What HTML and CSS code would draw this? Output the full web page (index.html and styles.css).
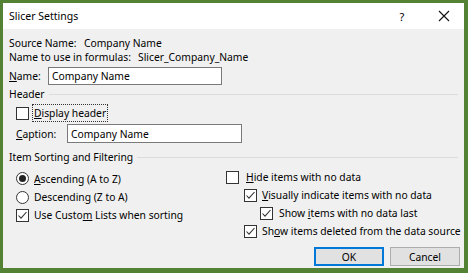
FILE: index.html
```html
<!DOCTYPE html>
<html>
<head>
<meta charset="utf-8">
<link rel="stylesheet" href="styles.css">
</head>
<body>
<div class="frame">
  <div class="dialog">
    <div class="titlebar">
      <span class="title">Slicer Settings</span>
      <span class="help">?</span>
      <span class="close"><svg width="12" height="12" viewBox="0 0 12 12"><path d="M1 1L11 11M11 1L1 11" stroke="#111" stroke-width="1.1" fill="none"/></svg></span>
    </div>
    <div class="body">
      <div class="info"><span class="info-label src-label">Source Name:</span><span>Company Name</span></div>
      <div class="info"><span class="info-label formula-label">Name to use in formulas:</span><span>Slicer_Company_Name</span></div>
      <div class="field name-field"><span class="field-label name-label"><u>N</u>ame:</span><div class="textbox name-box">Company Name</div></div>
      <div class="group-title header-title">Header</div>
      <div class="opt display-row"><span class="box"></span><span class="focus"><u>D</u>isplay header</span></div>
      <div class="field caption-field"><span class="field-label caption-label"><u>C</u>aption:</span><div class="textbox caption-box">Company Name</div></div>
      <div class="group-title sort-title">Item Sorting and Filtering</div>
      <div class="columns">
        <div class="col col-left">
          <div class="opt"><span class="radio on"></span><span><u>A</u>scending (A to Z)</span></div>
          <div class="opt"><span class="radio"></span><span>Descendin<u>g</u> (Z to A)</span></div>
          <div class="opt"><span class="box"><svg width="11" height="11" viewBox="0 0 11 11"><path d="M1.5 5.5L4 8.2L9.5 2" stroke="#333" stroke-width="1.1" fill="none"/></svg></span><span>Use Custo<u>m</u> Lists when sorting</span></div>
        </div>
        <div class="col col-right">
          <div class="opt hide-row"><span class="box"></span><span><u>H</u>ide items with no data</span></div>
          <div class="opt lvl1"><span class="box"><svg width="11" height="11" viewBox="0 0 11 11"><path d="M1.5 5.5L4 8.2L9.5 2" stroke="#333" stroke-width="1.1" fill="none"/></svg></span><span><u>V</u>isually indicate items with no data</span></div>
          <div class="opt lvl2"><span class="box"><svg width="11" height="11" viewBox="0 0 11 11"><path d="M1.5 5.5L4 8.2L9.5 2" stroke="#333" stroke-width="1.1" fill="none"/></svg></span><span>Show <u>i</u>tems with no data last</span></div>
          <div class="opt lvl1"><span class="box"><svg width="11" height="11" viewBox="0 0 11 11"><path d="M1.5 5.5L4 8.2L9.5 2" stroke="#333" stroke-width="1.1" fill="none"/></svg></span><span>Sh<u>o</u>w items deleted from the data source</span></div>
        </div>
      </div>
      <div class="buttons">
        <div class="btn btn-default">OK</div>
        <div class="btn">Cancel</div>
      </div>
    </div>
  </div>
</div>
</body>
</html>
```

FILE: styles.css
```css
* { box-sizing: border-box; }
body {
  margin: 0;
  font-family: "Noto Sans", "Open Sans", sans-serif;
  font-size: 10.3px;
  color: #000;
}
.frame {
  width: 468px;
  height: 273px;
  background: #548235;
  padding: 3px 4px 5px 3px;
}
.dialog {
  width: 100%;
  height: 100%;
  background: #f0f0f0;
  display: flex;
  flex-direction: column;
}
.titlebar {
  height: 26px;
  background: #fff;
  display: flex;
  align-items: center;
  padding: 0 8px 0 6px;
}
.title { flex: 1; font-size: 10.5px; }
.help {
  width: 20px;
  text-align: center;
  font-size: 11px;
  margin-right: 20px;
}
.close {
  width: 24px;
  display: flex;
  justify-content: center;
  align-items: center;
}
.body {
  flex: 1;
  display: flex;
  flex-direction: column;
  padding: 7px 4px 0 6px;
}
.info {
  height: 14px;
  line-height: 14px;
  display: flex;
  white-space: nowrap;
}
.src-label { width: 75px; }
.formula-label { width: 129px; }
.field {
  display: flex;
  align-items: center;
  white-space: nowrap;
}
.name-field { height: 18px; margin-top: 3px; }
.caption-field { height: 19px; margin-top: 2px; padding-left: 7px; }
.name-label { width: 39px; }
.caption-label { width: 51px; }
.textbox {
  height: 100%;
  background: #fff;
  border: 1px solid #7a7a7a;
  padding-left: 3px;
  display: flex;
  align-items: center;
}
.name-box { width: 174px; }
.caption-box { width: 175px; }
.group-title {
  height: 14px;
  line-height: 14px;
  display: flex;
  align-items: center;
  white-space: nowrap;
}
.group-title::after {
  content: "";
  flex: 1;
  height: 1px;
  background: #dcdcdc;
  margin-left: 4px;
  margin-right: 2px;
}
.header-title { margin-top: 2px; }
.sort-title { margin-top: 7px; }
.opt {
  height: 18px;
  display: flex;
  align-items: center;
  white-space: nowrap;
}
.display-row { margin-top: 3px; padding-left: 7px; }
.box {
  width: 13px;
  height: 13px;
  border: 1px solid #333;
  background: #fff;
  margin-right: 5px;
  display: flex;
  align-items: center;
  justify-content: center;
  flex: none;
}
.radio {
  width: 13px;
  height: 13px;
  border: 1px solid #333;
  border-radius: 50%;
  background: #fff;
  margin-right: 5px;
  display: flex;
  align-items: center;
  justify-content: center;
  flex: none;
}
.radio.on::after {
  content: "";
  width: 7px;
  height: 7px;
  border-radius: 50%;
  background: #222;
}
.focus {
  outline: 1px dotted #333;
  padding: 1px 1px;
  margin-left: -1px;
  line-height: 14px;
}
.columns {
  display: grid;
  grid-template-columns: 210px 1fr;
  padding-left: 7px;
}
.col-left { padding-top: 5px; }
.col-left .opt:first-child { height: 19px; }
.col-right { padding-top: 4px; }
.hide-row .box { margin-right: 7px; }
.lvl1 { padding-left: 18px; }
.lvl2 { padding-left: 34px; }
.lvl2 .box { margin-right: 6px; }
.buttons {
  display: flex;
  justify-content: flex-end;
  gap: 6px;
  margin-top: 7px;
}
.btn {
  width: 70px;
  height: 19px;
  background: #e1e1e1;
  border: 1px solid #adadad;
  display: flex;
  align-items: center;
  justify-content: center;
}
.btn-default {
  border-color: #0078d7;
  box-shadow: inset 0 0 0 1px #0078d7;
}
```
